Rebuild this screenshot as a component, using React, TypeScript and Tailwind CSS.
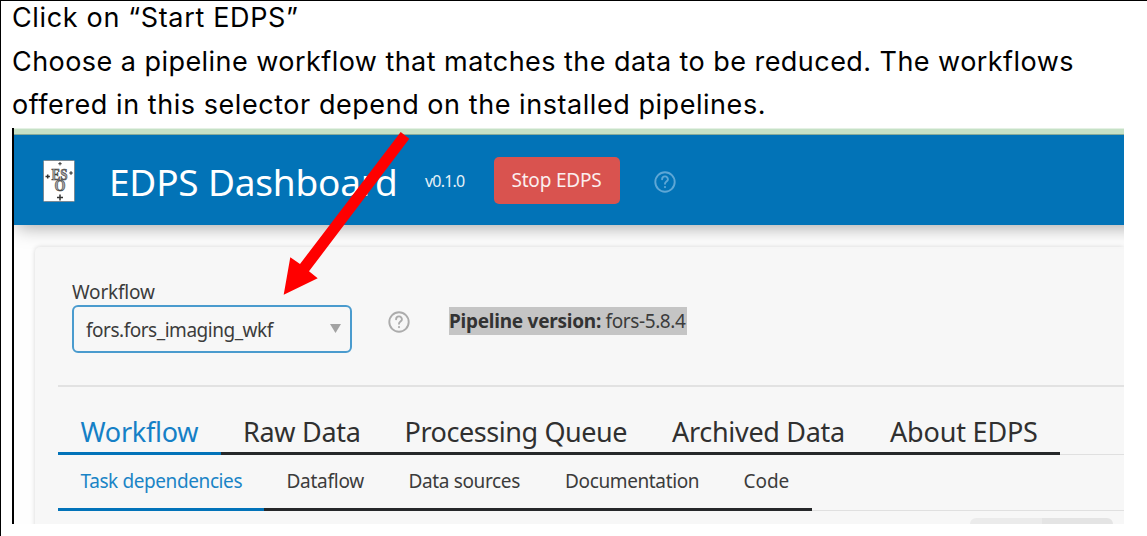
type Tab = { label: string; className: string };

const mainTabs: Tab[] = [
  { label: "Workflow", className: "w-[163px] pl-[22.5px] tracking-[-0.25px] text-[#1580c6] border-[#0273b9]" },
  { label: "Raw Data", className: "w-[161px] pl-[22px] tracking-[-0.3px] text-[#303030] border-[#26282a]" },
  { label: "Processing Queue", className: "w-[268px] pl-[22.5px] tracking-[-0.43px] text-[#303030] border-[#26282a]" },
  { label: "Archived Data", className: "w-[218px] pl-[22px] tracking-[-0.3px] text-[#303030] border-[#26282a]" },
  { label: "About EDPS", className: "w-[192px] pl-[22px] tracking-[-0.18px] text-[#303030] border-[#26282a]" },
];

const subTabs: Tab[] = [
  { label: "Task dependencies", className: "w-[206px] pl-[22.5px] tracking-[-0.4px] text-[#1a84c6] border-[#0273b9]" },
  { label: "Dataflow", className: "w-[122px] pl-[22.5px] tracking-[-0.26px] text-[#3c3c3c] border-[#26282a]" },
  { label: "Data sources", className: "w-[156px] pl-[22.5px] tracking-[-0.36px] text-[#3c3c3c] border-[#26282a]" },
  { label: "Documentation", className: "w-[179px] pl-[23px] tracking-[-0.37px] text-[#3c3c3c] border-[#26282a]" },
  { label: "Code", className: "w-[91px] pl-[22.5px] tracking-[-0.05px] text-[#3c3c3c] border-[#26282a]" },
];

function HelpIcon({ className }: { className: string }) {
  return (
    <svg viewBox="0 0 24 24" fill="none" stroke="currentColor" strokeWidth="1.9" strokeLinecap="round" strokeLinejoin="round" className={className}>
      <circle cx="12" cy="12" r="9.7" />
      <path d="M9.1 9.2a2.9 2.9 0 0 1 5.8 .2c0 2-2.9 2.3-2.9 4.3" />
      <path d="M12 17.1v.02" strokeWidth="2.2" />
    </svg>
  );
}

function EsoLogo() {
  return (
    <svg viewBox="0 0 32 42" className="h-[42px] w-8 shrink-0">
      <rect x="0.5" y="0.5" width="31" height="41" rx="1" fill="#fff" stroke="#7b8a94" />
      <g fontFamily="Liberation Serif, serif" fontWeight="bold" fill="#a8a8a8" stroke="#3c3c3c" strokeWidth="0.7" textAnchor="middle">
        <text x="16.5" y="19.5" fontSize="17" textLength="16" lengthAdjust="spacingAndGlyphs">ES</text>
        <text x="17" y="31.3" fontSize="17" textLength="11" lengthAdjust="spacingAndGlyphs">O</text>
      </g>
      <g stroke="#333" fill="none">
        <path d="M17 34.5v6M14 37.5h6" strokeWidth="1.5" />
        <path d="M4.7 14.5v4M2.5 16.5h4.4" strokeWidth="1.5" />
        <path d="M17 2v3.4M15.3 3.7h3.4" strokeWidth="1" />
        <path d="M28 11.2v3.6M26.2 13h3.6" strokeWidth="1.2" />
      </g>
    </svg>
  );
}

function Header() {
  return (
    <header className="relative z-10 -mr-8 flex h-[90px] shrink-0 items-start bg-[#0273b7] pl-[29px] text-white shadow-[0_5px_18px_-3px_rgba(0,0,0,0.36)]">
      <div className="pt-[25px]"><EsoLogo /></div>
      <h1 className="ml-[34px] w-[316px] pt-[22px] text-[37px] leading-[50px] tracking-[-0.2px] whitespace-nowrap">EDPS Dashboard</h1>
      <span className="w-[69px] pt-[32px] text-[16px] leading-[29px] tracking-[-0.8px] text-[#e6f1f8]">v0.1.0</span>
      <button className="mt-[22px] h-[47px] w-[126px] rounded-[5px] bg-[#d9534f] pr-px text-[19px] leading-[47px] tracking-[-0.17px] text-[#fbeeee]">Stop EDPS</button>
      <HelpIcon className="mt-[35px] ml-[33px] h-6 w-6 text-[#5ea7d6]" />
    </header>
  );
}

function Tabs({ items, size }: { items: Tab[]; size: "lg" | "sm" }) {
  const cell = size === "lg" ? "h-[43px] text-[27px] leading-[40px]" : "h-[56px] text-[19px] leading-[52px]";
  return (
    <nav className="flex shrink-0 items-stretch">
      {items.map((t) => (
        <div key={t.label} className={`shrink-0 border-b-[3px] whitespace-nowrap ${cell} ${t.className}`}>{t.label}</div>
      ))}
      <div className="flex-1 border-b border-[#e0e0e0]" />
    </nav>
  );
}

export default function App() {
  return (
    <div className="relative h-[536px] w-[1147px] overflow-hidden border-t border-l border-black bg-white pl-[11px]">
      <div className="h-[127px] font-['Inter',sans-serif] text-[27px] whitespace-nowrap text-black">
        <p className="leading-[34px] tracking-[0.65px]">Click on “Start EDPS”</p>
        <p className="mt-[5px] leading-[43px] tracking-[0.45px]">Choose a pipeline workflow that matches the data to be reduced. The workflows</p>
        <p className="leading-[43px] tracking-[0.55px]">offered in this selector depend on the installed pipelines.</p>
      </div>
      <div className="flex h-[396px] w-[1112px] flex-col overflow-hidden border-l-2 border-black bg-[#fefefe] font-['Noto_Sans',sans-serif] text-[#3c3c3c]">
        <div className="relative z-20 h-[7px] shrink-0 border-t border-b border-t-[#e4f1e4] border-b-[#87ab9a] bg-[#c6e1c6]" />
        <Header />
        <main className="mt-[22px] ml-[21px] flex flex-1 flex-col rounded-tl-[5px] bg-[#f7f7f7] pl-[23px] shadow-[0_0_5px_rgba(0,0,0,0.16)]">
          <div className="flex h-[140px] shrink-0 items-start border-b-[2px] border-[#e2e2e2]">
            <div className="ml-[14px] pt-[32px]">
              <label className="block h-[26px] text-[19px] leading-[26px] tracking-[-0.19px]">Workflow</label>
              <div className="flex h-[48px] w-[280px] items-start justify-between rounded-[6px] border-2 border-[#4a9bce] pr-[9px] pl-[12px]">
                <span className="text-[19px] leading-[46px] tracking-[-0.48px]">fors.fors_imaging_wkf</span>
                <svg viewBox="0 0 11 9" className="mt-[17px] h-[9px] w-[11px] fill-[#a3a3a3]"><path d="M0 0h11L5.5 9z" /></svg>
              </div>
            </div>
            <HelpIcon className="mt-[63px] ml-[35px] h-6 w-6 text-[#acacac]" />
            <p className="mt-[60px] ml-[38px] h-[28px] w-[238px] bg-[#c5c5c5] text-[19px] leading-[29px] tracking-[-0.4px] whitespace-nowrap">
              <strong className="tracking-[-0.25px] text-[#333]">Pipeline version:</strong> fors-5.8.4
            </p>
          </div>
          <div className="h-[25px] shrink-0" />
          <Tabs items={mainTabs} size="lg" />
          <Tabs items={subTabs} size="sm" />
          <div className="mt-[7px] mr-[11px] ml-auto flex h-[30px] w-[143px] shrink-0 overflow-hidden rounded-[6px]">
            <div className="flex-1 bg-[#ebebeb]" />
            <div className="flex-1 bg-[#e4e4e4]" />
          </div>
        </main>
      </div>
      <svg viewBox="0 0 1147 536" className="pointer-events-none absolute -top-px -left-px z-20 h-[536px] w-[1147px]">
        <path d="M400.7 132L409.3 138.7L309 271.3L317.7 278.3L283.7 294.7L290.3 257.3L300 264Z" fill="#f00" />
      </svg>
    </div>
  );
}
